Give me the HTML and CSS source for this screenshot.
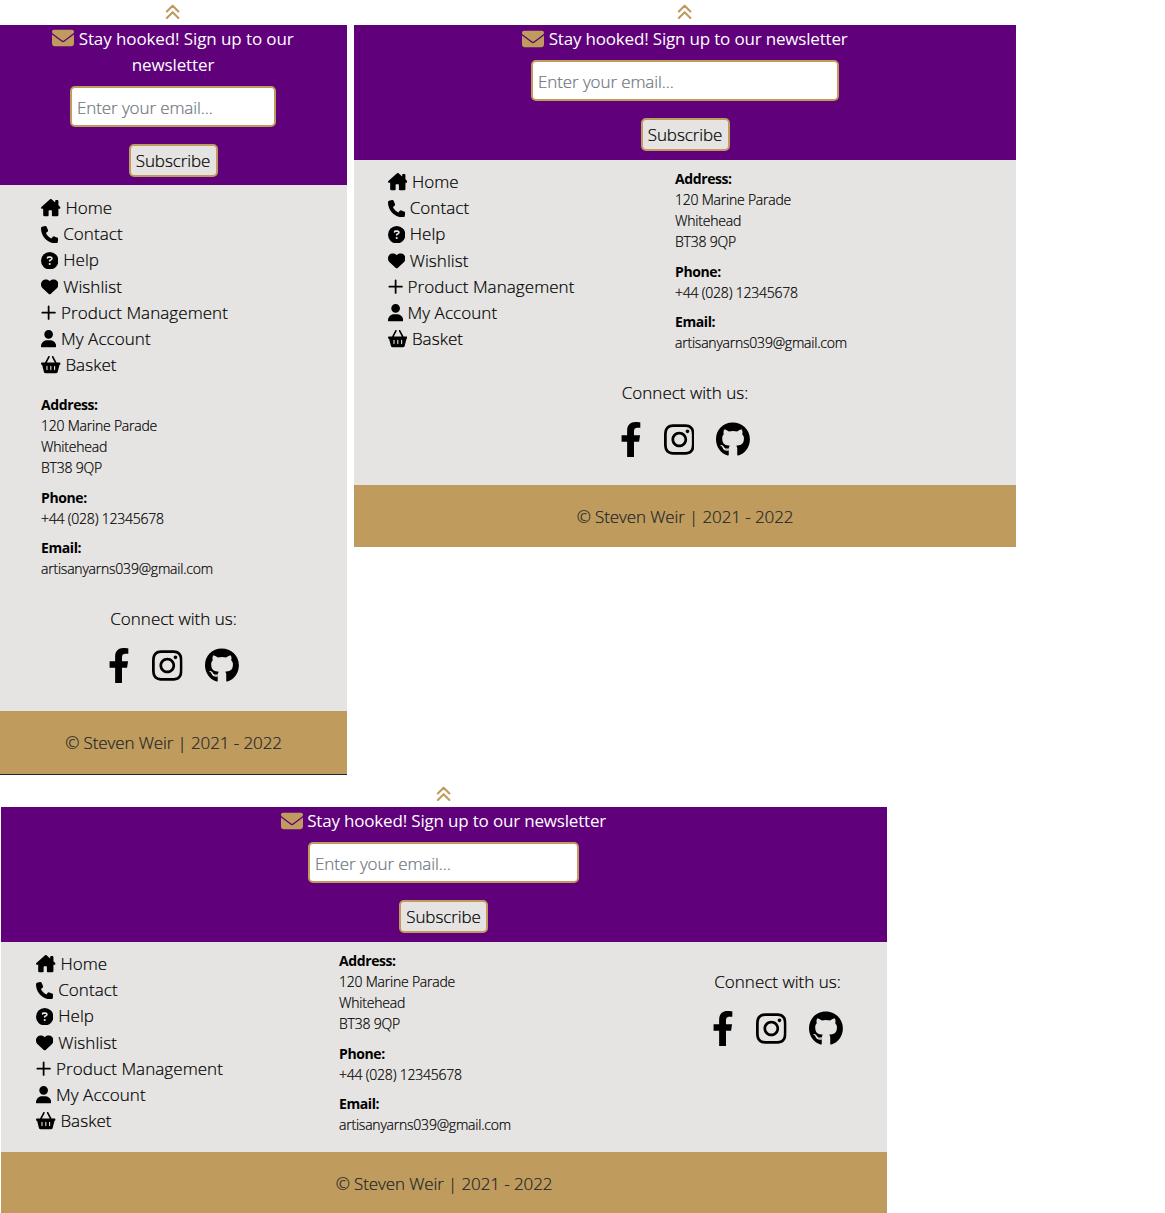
FILE: index.html
```
<!DOCTYPE html>
<html lang="en">
<head>
<meta charset="utf-8">
<title>Artisan Yarns footer</title>
<link rel="stylesheet" href="styles.css">
</head>
<body>
<svg class="sprite" aria-hidden="true">
<symbol id="up" viewBox="0 0 448 512"><path d="M54.600 246.600 224 77.300 393.400 246.600M54.600 438.600 224 269.300 393.400 438.600" fill="none" stroke="currentColor" stroke-width="62" stroke-linecap="round" stroke-linejoin="round"/></symbol>
<symbol id="mail" viewBox="0 0 512 512"><path d="M48 64C21.500 64 0 85.500 0 112c0 15.100 7.100 29.300 19.200 38.400L236.800 313.600c11.400 8.500 27 8.500 38.400 0L492.800 150.400c12.100-9.100 19.200-23.300 19.200-38.400 0-26.500-21.500-48-48-48H48zM0 176V384c0 35.300 28.700 64 64 64H448c35.300 0 64-28.700 64-64V176L294.400 339.200c-22.800 17.100-54 17.100-76.800 0L0 176z"/></symbol>
<symbol id="home" viewBox="0 0 576 512"><path d="M575.800 255.500c0 18-15 32.100-32 32.100h-32l.7 160.200c0 2.700-.2 5.400-.5 8.100V472c0 22.100-17.900 40-40 40H352c-22.100 0-32-17.900-32-40V360c0-17.700-6.300-32-24-32h-48c-17.700 0-24 14.300-24 32v112c0 22.100-9.900 40-32 40H104c-22.100 0-40-17.900-40-40V287.600H32c-18 0-32-14-32-32.100 0-9 3-17 10-24L266.400 8c7-7 15-8 22-8s15 2 21 7L416 100V64c0-17.700 14.300-32 32-32h32c17.700 0 32 14.300 32 32v121l52.800 46.500c8 7 12 15 11 24z"/></symbol>
<symbol id="phone" viewBox="0 0 512 512"><path d="M164.900 24.600c-7.700-18.600-28-28.500-47.400-23.200l-88 24C12.100 30.200 0 46 0 64c0 247.400 200.600 448 448 448 18 0 33.800-12.100 38.600-29.500l24-88c5.300-19.400-4.600-39.700-23.200-47.400l-96-40c-16.300-6.800-35.200-2.100-46.300 11.600L304.700 368C234.300 334.700 177.300 277.700 144 207.300L193.300 167c13.700-11.200 18.400-30 11.600-46.300l-40-96z"/></symbol>
<symbol id="help" viewBox="0 0 512 512"><path d="M256 512A256 256 0 1 0 256 0a256 256 0 1 0 0 512zM169.800 165.300c7.900-22.300 29.100-37.300 52.800-37.300h58.300c34.900 0 63.100 28.300 63.100 63.100 0 22.600-12.100 43.500-31.700 54.800L280 264.400c-.2 13-10.900 23.600-24 23.600-13.300 0-24-10.700-24-24V250.500c0-8.600 4.600-16.500 12.100-20.800l44.300-25.400c4.700-2.700 7.600-7.700 7.600-13.100 0-8.400-6.800-15.100-15.100-15.100H222.600c-3.400 0-6.400 2.100-7.500 5.300l-.4 1.200c-4.400 12.500-18.200 19-30.600 14.600s-19-18.200-14.600-30.600zM224 352a32 32 0 1 1 64 0 32 32 0 1 1-64 0z"/></symbol>
<symbol id="heart" viewBox="0 0 512 512"><path d="M47.600 300.400 228.300 469.100c7.500 7 17.400 10.900 27.700 10.900s20.200-3.900 27.700-10.900L464.400 300.400c30.400-28.300 47.600-68 47.600-109.500v-5.800c0-69.900-50.500-129.500-119.400-141C347 36.500 300.600 51.400 268 84L256 96 244 84c-32.600-32.600-79-47.500-124.600-39.900C50.500 55.600 0 115.200 0 185.100v5.800c0 41.500 17.200 81.200 47.600 109.500z"/></symbol>
<symbol id="plus" viewBox="0 0 448 512"><path d="M224 72v368M40 256h368" fill="none" stroke="currentColor" stroke-width="52" stroke-linecap="round"/></symbol>
<symbol id="user" viewBox="0 0 448 512"><path d="M224 256A128 128 0 1 0 224 0a128 128 0 1 0 0 256zM178.300 304C79.800 304 0 383.800 0 482.300 0 498.700 13.300 512 29.700 512H418.300c16.400 0 29.700-13.300 29.700-29.700C448 383.800 368.200 304 269.700 304H178.300z"/></symbol>
<symbol id="basket" viewBox="0 0 576 512"><path d="M253.300 35.100c6.100-11.800 1.500-26.300-10.200-32.400s-26.300-1.500-32.400 10.200L117.600 192H32c-17.700 0-32 14.300-32 32s14.300 32 32 32L83.900 463.500C91 492 116.600 512 146 512H430c29.400 0 55-20 62.100-48.500L544 256c17.700 0 32-14.300 32-32s-14.300-32-32-32H458.400L365.300 12.900C359.200 1.200 344.700-3.400 332.900 2.700s-16.300 20.600-10.200 32.400L404.300 192H171.700L253.300 35.100zM192 304v96c0 8.800-7.200 16-16 16s-16-7.200-16-16V304c0-8.800 7.200-16 16-16s16 7.200 16 16zm96-16c8.800 0 16 7.200 16 16v96c0 8.800-7.200 16-16 16s-16-7.200-16-16V304c0-8.800 7.200-16 16-16zm128 16v96c0 8.800-7.200 16-16 16s-16-7.200-16-16V304c0-8.800 7.200-16 16-16s16 7.200 16 16z"/></symbol>
<symbol id="facebook" viewBox="0 0 320 512"><path d="M279.140 288l14.220-92.660h-88.910v-60.130c0-25.350 12.420-50.060 52.240-50.060h40.420V6.260S260.430 0 225.360 0c-73.220 0-121.080 44.380-121.080 124.720v70.620H22.890V288h81.390v224h100.170V288z"/></symbol>
<symbol id="instagram" viewBox="0 0 448 512"><path d="M224.100 141c-63.600 0-114.900 51.300-114.900 114.900s51.300 114.900 114.900 114.900S339 319.500 339 255.900 287.700 141 224.100 141zm0 189.600c-41.100 0-74.700-33.500-74.700-74.700s33.500-74.700 74.700-74.700 74.700 33.500 74.700 74.700-33.600 74.700-74.700 74.700zm146.400-194.300c0 14.900-12 26.800-26.800 26.800-14.900 0-26.800-12-26.800-26.800s12-26.800 26.800-26.800 26.800 12 26.800 26.800zm76.100 27.200c-1.700-35.900-9.900-67.700-36.200-93.900-26.200-26.200-58-34.400-93.900-36.200-37-2.100-147.900-2.100-184.900 0-35.800 1.700-67.600 9.900-93.900 36.100s-34.400 58-36.200 93.900c-2.100 37-2.100 147.900 0 184.900 1.700 35.900 9.900 67.700 36.200 93.900s58 34.400 93.900 36.200c37 2.100 147.900 2.100 184.900 0 35.900-1.700 67.700-9.900 93.900-36.200 26.200-26.200 34.400-58 36.200-93.900 2.100-37 2.100-147.800 0-184.800zM398.800 388c-7.800 19.600-22.900 34.700-42.600 42.600-29.500 11.700-99.500 9-132.100 9s-102.700 2.600-132.100-9c-19.600-7.800-34.700-22.900-42.600-42.600-11.700-29.500-9-99.500-9-132.100s-2.600-102.700 9-132.100c7.800-19.600 22.900-34.700 42.600-42.600 29.500-11.700 99.500-9 132.100-9s102.700-2.600 132.100 9c19.600 7.800 34.700 22.900 42.600 42.600 11.700 29.500 9 99.500 9 132.100s2.700 102.700-9 132.100z"/></symbol>
<symbol id="github" viewBox="0 0 496 512"><path d="M165.900 397.400c0 2-2.300 3.600-5.200 3.600-3.300.3-5.600-1.300-5.600-3.600 0-2 2.300-3.600 5.200-3.600 3-.3 5.600 1.300 5.600 3.600zm-31.100-4.500c-.7 2 1.300 4.300 4.300 4.900 2.600 1 5.600 0 6.200-2s-1.300-4.300-4.300-5.200c-2.600-.7-5.500.3-6.200 2.300zm44.200-1.700c-2.900.7-4.900 2.600-4.600 4.900.3 2 2.900 3.300 5.900 2.600 2.900-.7 4.900-2.600 4.600-4.600-.3-1.900-3-3.200-5.900-2.900zM244.800 8C106.100 8 0 113.300 0 252c0 110.900 69.800 205.800 169.500 239.200 12.800 2.300 17.300-5.600 17.300-12.100 0-6.200-.3-40.400-.3-61.400 0 0-70 15-84.700-29.800 0 0-11.400-29.100-27.800-36.600 0 0-22.900-15.700 1.600-15.400 0 0 24.900 2 38.600 25.800 21.900 38.600 58.600 27.500 72.900 20.900 2.300-16 8.800-27.100 16-33.700-55.900-6.200-112.300-14.300-112.300-110.500 0-27.500 7.600-41.300 23.600-58.900-2.600-6.500-11.100-33.300 2.600-67.900 20.900-6.500 69 27 69 27 20-5.600 41.500-8.500 62.800-8.500s42.800 2.900 62.800 8.500c0 0 48.100-33.600 69-27 13.700 34.700 5.200 61.400 2.600 67.900 16 17.700 25.800 31.500 25.800 58.900 0 96.500-58.900 104.200-114.800 110.500 9.200 7.900 17 22.900 17 46.400 0 33.700-.3 75.400-.3 83.600 0 6.500 4.600 14.400 17.300 12.100C428.200 457.800 496 362.900 496 252 496 113.300 383.500 8 244.800 8z"/></symbol>
</svg>
<main class="showcase">
<div class="row">
<footer class="panel small">
<div class="top"><svg class="icon i448"><use href="#up"/></svg></div>
<section class="newsletter"><p class="pitch"><svg class="mail"><use href="#mail"/></svg> <span>Stay hooked! Sign up to our<br>newsletter</span></p><input class="email" type="email" placeholder="Enter your email..."><button class="subscribe"><span>Subscribe</span></button></section>
<div class="content">
<ul class="links"><li><svg class="icon i576"><use href="#home"/></svg><span>Home</span></li><li><svg class="icon"><use href="#phone"/></svg><span>Contact</span></li><li><svg class="icon"><use href="#help"/></svg><span>Help</span></li><li><svg class="icon"><use href="#heart"/></svg><span>Wishlist</span></li><li><svg class="icon i448"><use href="#plus"/></svg><span>Product Management</span></li><li><svg class="icon i448"><use href="#user"/></svg><span>My Account</span></li><li><svg class="icon i576"><use href="#basket"/></svg><span>Basket</span></li></ul>
<address class="details"><p><b>Address:</b><br>120 Marine Parade<br>Whitehead<br>BT38 9QP</p><p><b>Phone:</b><br>+44 (028) 12345678</p><p><b>Email:</b><br><span>artisanyarns039@gmail.com</span></p></address>
<section class="connect"><p>Connect with us:</p><div class="social"><svg class="fb"><use href="#facebook"/></svg><svg class="ig"><use href="#instagram"/></svg><svg class="gh"><use href="#github"/></svg></div></section>
</div>
<div class="copyright"><span>© Steven Weir | 2021 - 2022</span></div>
</footer>
<footer class="panel medium">
<div class="top"><svg class="icon i448"><use href="#up"/></svg></div>
<section class="newsletter"><p class="pitch"><svg class="mail"><use href="#mail"/></svg> <span>Stay hooked! Sign up to our newsletter</span></p><input class="email" type="email" placeholder="Enter your email..."><button class="subscribe"><span>Subscribe</span></button></section>
<div class="content">
<ul class="links"><li><svg class="icon i576"><use href="#home"/></svg><span>Home</span></li><li><svg class="icon"><use href="#phone"/></svg><span>Contact</span></li><li><svg class="icon"><use href="#help"/></svg><span>Help</span></li><li><svg class="icon"><use href="#heart"/></svg><span>Wishlist</span></li><li><svg class="icon i448"><use href="#plus"/></svg><span>Product Management</span></li><li><svg class="icon i448"><use href="#user"/></svg><span>My Account</span></li><li><svg class="icon i576"><use href="#basket"/></svg><span>Basket</span></li></ul>
<address class="details"><p><b>Address:</b><br>120 Marine Parade<br>Whitehead<br>BT38 9QP</p><p><b>Phone:</b><br>+44 (028) 12345678</p><p><b>Email:</b><br><span>artisanyarns039@gmail.com</span></p></address>
<section class="connect"><p>Connect with us:</p><div class="social"><svg class="fb"><use href="#facebook"/></svg><svg class="ig"><use href="#instagram"/></svg><svg class="gh"><use href="#github"/></svg></div></section>
</div>
<div class="copyright"><span>© Steven Weir | 2021 - 2022</span></div>
</footer>
</div>
<footer class="panel large">
<div class="top"><svg class="icon i448"><use href="#up"/></svg></div>
<section class="newsletter"><p class="pitch"><svg class="mail"><use href="#mail"/></svg> <span>Stay hooked! Sign up to our newsletter</span></p><input class="email" type="email" placeholder="Enter your email..."><button class="subscribe"><span>Subscribe</span></button></section>
<div class="content">
<ul class="links"><li><svg class="icon i576"><use href="#home"/></svg><span>Home</span></li><li><svg class="icon"><use href="#phone"/></svg><span>Contact</span></li><li><svg class="icon"><use href="#help"/></svg><span>Help</span></li><li><svg class="icon"><use href="#heart"/></svg><span>Wishlist</span></li><li><svg class="icon i448"><use href="#plus"/></svg><span>Product Management</span></li><li><svg class="icon i448"><use href="#user"/></svg><span>My Account</span></li><li><svg class="icon i576"><use href="#basket"/></svg><span>Basket</span></li></ul>
<address class="details"><p><b>Address:</b><br>120 Marine Parade<br>Whitehead<br>BT38 9QP</p><p><b>Phone:</b><br>+44 (028) 12345678</p><p><b>Email:</b><br><span>artisanyarns039@gmail.com</span></p></address>
<section class="connect"><p>Connect with us:</p><div class="social"><svg class="fb"><use href="#facebook"/></svg><svg class="ig"><use href="#instagram"/></svg><svg class="gh"><use href="#github"/></svg></div></section>
</div>
<div class="copyright"><span>© Steven Weir | 2021 - 2022</span></div>
</footer>
</main>
</body>
</html>
```

FILE: styles.css
```
* { box-sizing: border-box; }
body {
  margin: 0;
  background: #fff;
  color: #000;
  font: 300 17px/26.170px "Open Sans", "Noto Sans", sans-serif;
  letter-spacing: -0.1px;
  -webkit-text-stroke: 0.2px;
}
p, ul { margin: 0; padding: 0; }
svg { fill: currentColor; flex: none; }
.sprite { display: none; }
.showcase { display: flex; flex-direction: column; gap: 7px; height: 1213px; overflow: hidden; }
.row { display: flex; align-items: flex-start; gap: 7px; }
.panel { display: flex; flex-direction: column; }
.small { width: 347px; height: 775px; border-bottom: 1px solid #212529; }
.medium { width: 662px; height: 547px; }
.large { width: 886px; height: 431px; margin-left: 1px; }

.icon { width: 17.440px; height: 17.440px; }
.i448 { width: 15.260px; }
.i576 { width: 19.620px; }

.top { height: 25px; flex: none; display: flex; justify-content: center; padding-top: 3px; color: #bf9c5d; }
.small .top { padding-right: 1px; }
.newsletter {
  display: flex;
  flex-direction: column;
  align-items: center;
  flex: none;
  height: 135px;
  background: #60007b;
  color: #fff;
}
.small .newsletter { height: 160px; padding-right: 1px; }
.large .newsletter { padding-right: 1px; }
.pitch {
  height: 26px;
  line-height: 26px;
  padding-top: 1px;
  margin-bottom: 9px;
  text-align: center;
  font-weight: 400;
  letter-spacing: -0.18px;
  white-space: nowrap;
  -webkit-text-stroke: 0;
}
.small .pitch { height: 52px; margin-bottom: 8.500px; letter-spacing: -0.1px; }
.mail { width: 22px; height: 22px; vertical-align: -5px; color: #bf9c5d; }
.small .mail { vertical-align: -4px; }
.email {
  width: 308px;
  height: 41px;
  flex: none;
  padding: 3px 5px 1px;
  border: 2px solid #bf9c5d;
  border-radius: 5px;
  background: #fff;
  font: inherit;
  letter-spacing: inherit;
}
.email::placeholder { color: #6c757d; opacity: 1; }
.small .email { width: 206px; }
.large .email { width: 271px; }
.subscribe {
  width: 89px;
  height: 33px;
  flex: none;
  margin-top: 17px;
  padding: 2px 0 0;
  border: 2px solid #bf9c5d;
  border-radius: 5px;
  background: #e5e4e2;
  color: #000;
  font: inherit;
  letter-spacing: inherit;
}

.content { flex: 1; display: grid; align-content: start; background: #e5e4e2; }
.small .content { padding: 10px 0 0 41px; }
.medium .content { grid-template-columns: 287.500px 1fr; padding: 9px 0 0 33.500px; }
.large .content { grid-template-columns: 303px 328.500px 1fr; padding: 9px 0 0 35px; }
.links { list-style: none; letter-spacing: 0.060px; }
.links li { display: flex; align-items: center; gap: 4.800px; white-space: nowrap; }
.details { font-size: 14px; line-height: 21px; font-style: normal; letter-spacing: -0.22px; margin-top: -1px; }
.small .details { margin-top: 16px; }
.details p { margin-bottom: 8.500px; }
.details b { font-weight: 700; letter-spacing: -0.4px; -webkit-text-stroke: 0; }
.connect { display: flex; flex-direction: column; align-items: center; letter-spacing: 0; }
.small .connect { margin: 18px 0 0 -41px; }
.medium .connect { grid-column: 1 / -1; margin: 18px 0 0 -33.500px; }
.large .connect { width: 220px; padding-top: 18px; }
.social { display: flex; gap: 22px; margin-top: 16px; }
.social svg { height: 35px; }
.fb { width: 21.900px; }
.ig { width: 30.600px; }
.gh { width: 33.900px; }
.copyright { height: 62px; flex: none; background: #bf9c5d; color: #212529; text-align: center; line-height: 63px; }
.small .copyright { height: 63px; }
.large .copyright { height: 61px; }
```
